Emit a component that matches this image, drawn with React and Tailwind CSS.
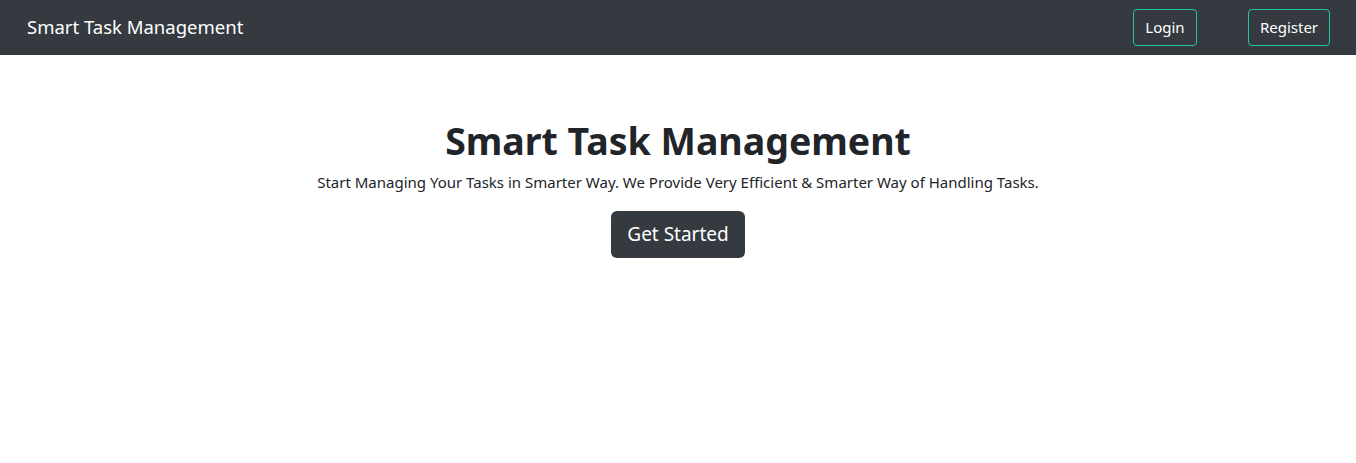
import React from 'react';

const font = { fontFamily: '"Noto Sans", "Open Sans", sans-serif' };

export default function App() {
  return (
    <div className="min-h-[463px] bg-white text-[#212529]" style={font}>
      {/* navbar */}
      <nav className="h-[55px] bg-[#343a40] flex items-center justify-between pl-[27px] pr-[26px]">
        <a className="text-[18.5px] text-white leading-none">Smart Task Management</a>
        <div className="flex items-center gap-[51px]">
          <button className="h-[37px] w-[64px] rounded-[4px] border border-[#20c997] text-white text-[15px]">Login</button>
          <button className="h-[37px] w-[82px] rounded-[4px] border border-[#20c997] text-white text-[15px]">Register</button>
        </div>
      </nav>

      {/* hero */}
      <div className="flex flex-col items-center pt-[63px] text-center">
        <h1 className="text-[37.5px] font-bold leading-[46px]">Smart Task Management</h1>
        <p className="text-[15px] leading-[24px] mt-[6px]">
          Start Managing Your Tasks in Smarter Way. We Provide Very Efficient &amp; Smarter Way of Handling Tasks.
        </p>
        <button className="mt-[17px] h-[47px] w-[134px] rounded-[6px] bg-[#343a40] text-white text-[19px]">Get Started</button>
      </div>
    </div>
  );
}
